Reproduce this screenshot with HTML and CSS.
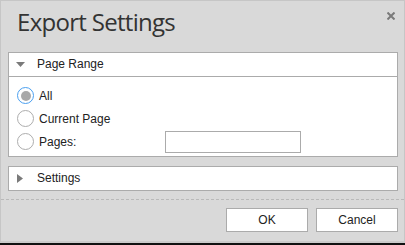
FILE: index.html
```html
<!DOCTYPE html>
<html>
<head>
<meta charset="utf-8">
<link rel="stylesheet" href="styles.css">
</head>
<body>
<div class="dialog">
  <div class="titlebar">
    <div class="title">Export Settings</div>
    <svg class="close" width="8" height="8" viewBox="0 0 8 8"><path d="M0.5 0.5 L7.5 7.5 M7.5 0.5 L0.5 7.5" stroke="#7a7a7a" stroke-width="2"/></svg>
  </div>
  <div class="panel">
    <div class="panel-head">
      <svg class="tri-down" width="9" height="5" viewBox="0 0 9 5"><path d="M0 0 H9 L4.5 5 Z" fill="#7a7a7a"/></svg>
      <span class="head-text">Page Range</span>
    </div>
    <div class="panel-body">
      <div class="row">
        <div class="opt"><span class="radio checked"><span class="dot"></span></span><span class="label">All</span></div>
      </div>
      <div class="row">
        <div class="opt"><span class="radio"></span><span class="label">Current Page</span></div>
      </div>
      <div class="row">
        <div class="opt"><span class="radio"></span><span class="label">Pages:</span></div>
        <div class="textbox"></div>
      </div>
    </div>
  </div>
  <div class="panel panel-collapsed">
    <div class="panel-head closed">
      <svg class="tri-right" width="6" height="9" viewBox="0 0 6 9"><path d="M0 0 L6 4.5 L0 9 Z" fill="#7a7a7a"/></svg>
      <span class="head-text">Settings</span>
    </div>
  </div>
  <div class="separator"></div>
  <div class="buttons">
    <div class="btn">OK</div>
    <div class="btn">Cancel</div>
  </div>
</div>
<div class="edge"></div>
</body>
</html>
```
FILE: styles.css
```css
html, body {
  margin: 0;
  padding: 0;
  background: #ffffff;
}
body {
  width: 405px;
  height: 245px;
  overflow: hidden;
  font-family: "Liberation Sans", Arial, sans-serif;
  font-size: 12px;
  color: #222222;
}
.dialog {
  box-sizing: border-box;
  width: 405px;
  height: 243px;
  background: #d9d9d9;
  border: 1px solid #c6c6c6;
  border-bottom: 2px solid #cbcbcb;
  display: flex;
  flex-direction: column;
}
.titlebar {
  position: relative;
  padding: 5px 0 14px 16px;
}
.title {
  font-family: "Open Sans", "Noto Sans", sans-serif;
  font-size: 24px;
  line-height: 32px;
  letter-spacing: -0.7px;
  color: #333333;
}
.close {
  position: absolute;
  top: 11px;
  right: 9px;
}
.panel {
  margin: 0 6px 0 7px;
  border: 1px solid #ababab;
  background: #ffffff;
}
.panel-collapsed {
  margin-top: 9px;
}
.panel-head {
  height: 23px;
  display: flex;
  align-items: center;
  padding-left: 7px;
  border-bottom: 1px solid #ababab;
}
.panel-head.closed {
  border-bottom: none;
  padding-left: 8px;
}
.tri-down {
  margin-right: 12px;
}
.tri-right {
  margin-right: 14px;
}
.head-text {
  line-height: 23px;
}
.panel-body {
  padding: 7px 0 3px 8px;
  display: flex;
  flex-direction: column;
}
.row {
  height: 23px;
  display: flex;
  align-items: center;
}
.opt {
  width: 148px;
  display: flex;
  align-items: center;
}
.radio {
  box-sizing: border-box;
  width: 17px;
  height: 17px;
  border: 1px solid #adadad;
  border-radius: 50%;
  background: #ffffff;
  display: flex;
  align-items: center;
  justify-content: center;
  flex: none;
}
.radio.checked {
  border-color: #4a9ff0;
}
.dot {
  width: 10px;
  height: 10px;
  border-radius: 50%;
  background: #a9a9a9;
}
.label {
  margin-left: 5px;
}
.textbox {
  box-sizing: border-box;
  width: 136px;
  height: 22px;
  border: 1px solid #ababab;
  background: #ffffff;
  margin-top: 1px;
}
.separator {
  margin-top: 8px;
  height: 0;
  border-top: 1px dashed #b9b9b9;
}
.buttons {
  margin-top: 8px;
  display: flex;
  justify-content: flex-end;
  gap: 8px;
  padding-right: 6px;
}
.btn {
  box-sizing: border-box;
  width: 82px;
  height: 24px;
  border: 1px solid #ababab;
  background: #ffffff;
  display: flex;
  align-items: center;
  justify-content: center;
}
.edge {
  height: 2px;
  background: #111111;
}
```
